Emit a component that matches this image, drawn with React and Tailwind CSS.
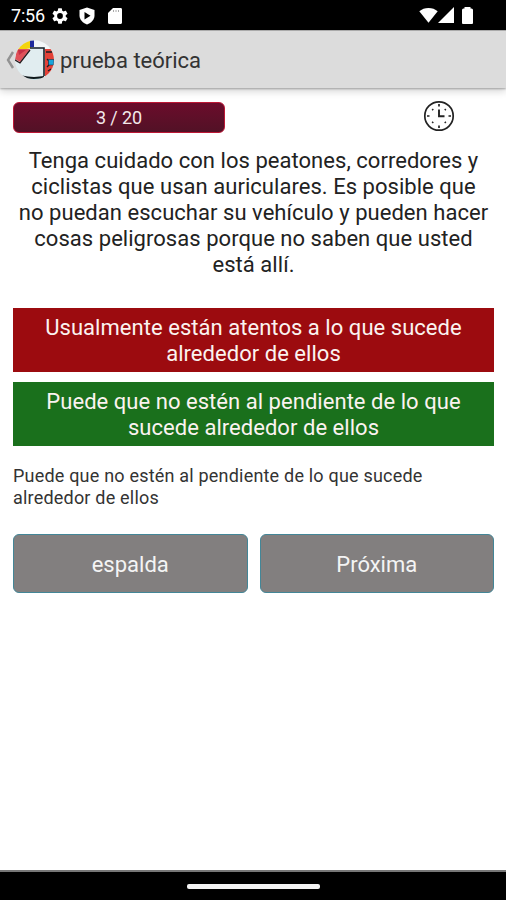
const StatusBar = () => (
  <div className="flex h-[30px] shrink-0 items-center justify-between bg-black pl-[11px] pr-[33px] text-white">
    <div className="flex items-center pt-px">
      <span className="w-[34px] whitespace-nowrap text-[18px] leading-none tracking-[-0.2px]">
        7:56
      </span>
      <svg viewBox="2 2 20 20" className="ml-[7px] size-4" fill="currentColor">
        <path d="M19.14 12.94c.04-.3.06-.61.06-.94s-.02-.64-.07-.94l2.03-1.58a.49.49 0 0 0 .12-.61l-1.92-3.32a.49.49 0 0 0-.59-.22l-2.39.96a7 7 0 0 0-1.62-.94l-.36-2.54a.48.48 0 0 0-.48-.41h-3.84a.48.48 0 0 0-.47.41l-.36 2.54c-.59.24-1.13.57-1.62.94l-2.39-.96a.48.48 0 0 0-.59.22L2.74 8.87a.48.48 0 0 0 .12.61l2.03 1.58c-.05.3-.09.63-.09.94s.02.64.07.94l-2.03 1.58a.49.49 0 0 0-.12.61l1.92 3.32c.12.22.37.29.59.22l2.39-.96c.5.38 1.03.7 1.62.94l.36 2.54c.05.24.24.41.48.41h3.84c.24 0 .44-.17.47-.41l.36-2.54c.59-.24 1.13-.56 1.62-.94l2.39.96c.22.08.47 0 .59-.22l1.92-3.32a.48.48 0 0 0-.12-.61zM12 15.6a3.6 3.6 0 1 1 0-7.2 3.6 3.6 0 0 1 0 7.2z" />
      </svg>
      <svg viewBox="0 0 16 18" className="ml-[11px] h-[18px] w-4">
        <path
          d="M8 .5 15.500 3v5.500c0 4-3 7.300-7.500 9C3.500 15.800.5 12.500.5 8.500V3z"
          fill="currentColor"
        />
        <path d="m5.500 5 6 3.700-6 3.700z" fill="#000" />
      </svg>
      <svg viewBox="0 0 14 16" className="ml-[13px] h-4 w-[14px]">
        <path
          d="M5 0h7.500C13.500 0 14 .6 14 1.500v13c0 .9-.6 1.500-1.500 1.500h-11C.6 16 0 15.400 0 14.500V5z"
          fill="currentColor"
        />
        <path d="M5.500 2v2M8 2v2M10.500 2v2" stroke="#aaa" strokeWidth="1" />
      </svg>
    </div>
    <div className="flex items-center">
      <svg viewBox="0 0 19 16" className="h-4 w-[19px]" fill="currentColor">
        <path d="M.3 4.300C5-.2 14-.2 18.700 4.300L9.500 15.800z" />
      </svg>
      <svg viewBox="0 0 16 16" className="size-4" fill="currentColor">
        <path d="M16 0v16H0z" />
      </svg>
      <svg viewBox="0 0 11 17" className="ml-[8px] h-[17px] w-[11px]" fill="currentColor">
        <path d="M2.500 0h6v1.500h1q1.500 0 1.500 1.500v13q0 1-1 1H1q-1 0-1-1V3q0-1.500 1.500-1.500h1z" />
      </svg>
    </div>
  </div>
);

const AppLogo = () => (
  <svg viewBox="0 0 40 40" className="size-10">
    <defs>
      <clipPath id="logo">
        <circle cx="20.500" cy="20" r="19.500" />
      </clipPath>
    </defs>
    <g clipPath="url(#logo)">
      <path d="M0 0h40v40H0z" fill="#e1edf0" />
      <path d="M0 0h17v8L3 11z" fill="#f3d50c" />
      <path d="M20 0h20v10H30V7H20z" fill="#f3f6f7" />
      <path d="M3 9h13L6 22l-5-3z" fill="#e0525a" />
      <path d="M4 10h8l-7 5z" fill="#c62f45" />
      <path d="M0 19.500 6 23 16 10" fill="none" stroke="#241719" strokeWidth="1.300" />
      <path d="M16 0h4v7h-4z" fill="#1f2a9c" />
      <path d="M16 8h14v28" fill="none" stroke="#172027" strokeWidth="1.600" />
      <path d="M31 9h9v28h-9z" fill="#e44137" />
      <path d="M32 12h6M33 19l2 2v4l-2 2M34 31l3-2" fill="none" stroke="#1b1b22" strokeWidth="1.300" />
      <path d="M34.500 19.500H40V25h-5.500z" fill="#19a5dc" stroke="#17304a" strokeWidth="0.600" />
      <path d="M8 35.500q6 1 12 1.500 6-.3 10-1v2l-4 1H12z" fill="#10191c" />
      <path d="M13 38.500q7 .8 13 0v1.500H13z" fill="#a9dce0" />
    </g>
  </svg>
);

const AppBar = ({ title }) => (
  <header className="flex h-[58px] shrink-0 items-center border-t border-[#aaa] bg-[#dcdcdc] pl-[6px] shadow-[0_1px_2px_rgba(0,0,0,0.3),0_4px_7px_rgba(0,0,0,0.14)]">
    <svg viewBox="0 0 9 18" className="h-[18px] w-[9px]">
      <path d="M7 1 2 9l5 8" fill="none" stroke="#929292" strokeWidth="2.400" />
    </svg>
    <div className="ml-[-1px] size-10">
      <AppLogo />
    </div>
    <h1 className="ml-[6px] whitespace-nowrap pt-[3px] text-[22px] leading-none text-[#333]">
      {title}
    </h1>
  </header>
);

const ClockIcon = () => (
  <svg viewBox="0 0 32 32" className="mb-[2px] size-8" fill="none" stroke="#222">
    <circle cx="16" cy="16" r="14.200" strokeWidth="1.700" />
    <path d="M16 9.500V16.200h5.500" strokeWidth="1.900" />
    <path
      d="M16 4v2.500M16 25.500V28M4 16h2.500M25.500 16H28M9.200 9.200l1 1M21.800 21.800l1 1M9.200 22.800l1-1M21.800 10.200l1-1"
      strokeWidth="1.700"
    />
  </svg>
);

const Answer = ({ className, children }) => (
  <button
    className={`flex h-16 w-full items-center justify-center whitespace-nowrap pt-[3px] text-center text-[22px] leading-[25.800px] tracking-[0.04px] text-[#fbf3f0] ${className}`}
  >
    <span>{children}</span>
  </button>
);

const NavButton = ({ children }) => (
  <button className="h-[59px] flex-1 rounded-[6px] border border-[#438697] bg-[#827f7f] pt-[2px] text-[22px] text-[#f4f4f4]">
    {children}
  </button>
);

const App = () => (
  <div className="flex h-[900px] w-[506px] flex-col overflow-hidden bg-white font-['Roboto',sans-serif]">
    <StatusBar />
    <AppBar title="prueba teórica" />
    <main className="flex flex-1 flex-col pl-[13px] pr-[12px] pt-[12px]">
      <div className="flex items-center justify-between pr-[39px]">
        <div className="flex h-[31px] w-[212px] items-center justify-center rounded-[6px] border border-[#bd1735] bg-linear-to-b from-[#6b0b2b] to-[#521126] pt-px text-[18px] tracking-[-0.1px] text-[#f3e8ea]">
          3 / 20
        </div>
        <ClockIcon />
      </div>
      <p className="mt-[14px] whitespace-nowrap text-center text-[22px] leading-[25.900px] tracking-[0.04px] text-[#222]">
        Tenga cuidado con los peatones, corredores y
        <br />
        ciclistas que usan auriculares. Es posible que
        <br />
        no puedan escuchar su vehículo y pueden hacer
        <br />
        cosas peligrosas porque no saben que usted
        <br />
        está allí.
      </p>
      <div className="mt-[30px] flex flex-col gap-[10px]">
        <Answer className="bg-[#9c0b0f]">
          Usualmente están atentos a lo que sucede
          <br />
          alrededor de ellos
        </Answer>
        <Answer className="bg-[#1a701c]">
          Puede que no estén al pendiente de lo que
          <br />
          sucede alrededor de ellos
        </Answer>
      </div>
      <p className="mt-[19.500px] whitespace-nowrap text-[18px] leading-[21.500px] tracking-[0.2px] text-[#333]">
        Puede que no estén al pendiente de lo que sucede
        <br />
        alrededor de ellos
      </p>
      <div className="mt-[26px] flex gap-[12px]">
        <NavButton>espalda</NavButton>
        <NavButton>Próxima</NavButton>
      </div>
    </main>
    <div className="flex h-[30px] shrink-0 items-center justify-center border-t-2 border-[#777] bg-black pl-px">
      <div className="h-[5px] w-[133px] rounded-[2px] bg-[#f4f4f4]" />
    </div>
  </div>
);

export default App;
